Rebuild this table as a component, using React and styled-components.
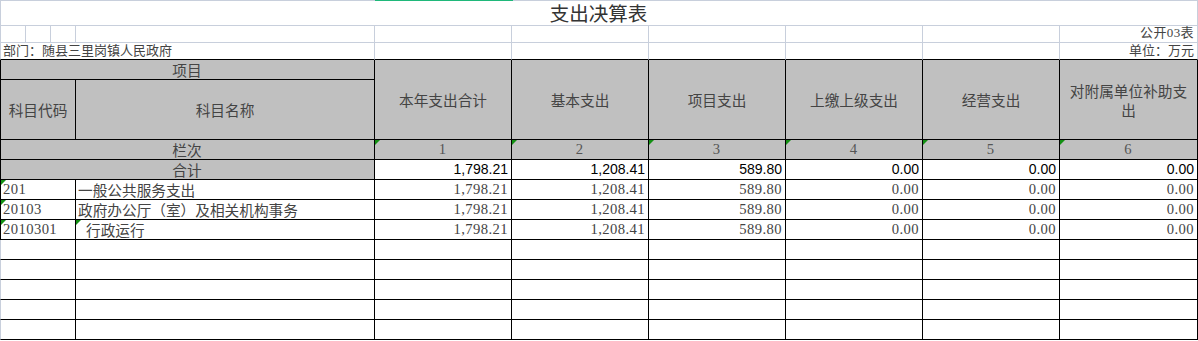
import React from "react";
import styled, { createGlobalStyle } from "styled-components";

const LIGHT = "#c8cfdc";
const CJK = `"Noto Sans CJK SC", "Liberation Serif", sans-serif`;
const NUM = `"Liberation Serif", "Noto Sans CJK SC", serif`;
const TOTAL = `"Liberation Sans", "Noto Sans CJK SC", sans-serif`;

const GlobalStyle = createGlobalStyle`
  html, body {
    margin: 0;
    padding: 0;
    background: #fff;
  }
`;

const Sheet = styled.div`
  display: grid;
  width: 1198px;
  grid-template-columns: 26px 25px 25px 299px repeat(5, 137px) 138px;
  grid-template-rows: 26px 17px 17px 20px 60px 20px 20px repeat(8, 20px);
  color: #333;
`;

const justify = { left: "flex-start", right: "flex-end", center: "center" };

const Cell = styled.div`
  grid-column: span ${(p) => p.$span || 1};
  grid-row: span ${(p) => p.$rows || 1};
  position: relative;
  box-sizing: border-box;
  display: flex;
  align-items: ${(p) => (p.$middle ? "center" : "flex-end")};
  justify-content: ${(p) => justify[p.$align || "left"]};
  text-align: ${(p) => p.$align || "left"};
  padding: ${(p) => (p.$middle ? "0 8px" : "0 3px")};
  padding-left: ${(p) => (p.$indent ? "10px" : p.$middle ? "8px" : "2px")};
  border-right: 1px solid ${(p) => (p.$light ? LIGHT : "#000")};
  border-bottom: 1px solid ${(p) => (p.$lightBottom ? LIGHT : "#000")};
  border-left: ${(p) => (p.$first ? `1px solid ${p.$lightLeft ? LIGHT : "#000"}` : "none")};
  border-top: ${(p) => (p.$top ? `1px solid ${LIGHT}` : "none")};
  background: ${(p) => (p.$head ? "#c0c0c0" : "#fff")};
  font-family: ${(p) => (p.$font === "num" ? NUM : p.$font === "total" ? TOTAL : CJK)};
  font-size: ${(p) => p.$size || 14.67}px;
  letter-spacing: ${(p) => (p.$font === "num" ? "0.4px" : "0")};
  color: ${(p) => p.$color || "#444"};
  line-height: 19px;
  white-space: ${(p) => (p.$wrap ? "normal" : "nowrap")};

  &::before {
    content: "";
    display: ${(p) => (p.$mark ? "block" : "none")};
    position: absolute;
    top: 0;
    left: 0;
    border-top: 5px solid #139013;
    border-right: 5px solid transparent;
  }
`;

const TitleCell = styled(Cell)`
  font-size: 19.5px;
  line-height: 24px;

  &::after {
    content: "";
    position: absolute;
    top: -1px;
    left: 374px;
    width: 138px;
    height: 1px;
    background: #1fb87a;
  }
`;

const heads = [
  "本年支出合计",
  "基本支出",
  "项目支出",
  "上缴上级支出",
  "经营支出",
  "对附属单位补助支出",
];

const total = ["1,798.21", "1,208.41", "589.80", "0.00", "0.00", "0.00"];

const rows = [
  { code: "201", name: "一般公共服务支出", values: total },
  { code: "20103", name: "政府办公厅（室）及相关机构事务", values: total },
  { code: "2010301", name: "行政运行", values: total, indent: true },
];

const App = () => {
  return (
    <>
      <GlobalStyle />
      <Sheet>
        <TitleCell $span={10} $align="center" $color="#333" $light $lightBottom $first $lightLeft $top>
          支出决算表
        </TitleCell>

        {Array.from({ length: 9 }).map((_, i) => (
          <Cell key={`r2-${i}`} $light $lightBottom $first={i === 0} $lightLeft />
        ))}
        <Cell $light $lightBottom $align="right" $font="num" $size={13}>
          公开03表
        </Cell>

        <Cell $span={4} $light $first $lightLeft $size={13}>
          部门：随县三里岗镇人民政府
        </Cell>
        {Array.from({ length: 5 }).map((_, i) => (
          <Cell key={`r3-${i}`} $light />
        ))}
        <Cell $light $align="right" $size={13}>
          单位：万元
        </Cell>

        <Cell $span={4} $head $first $align="center">
          项目
        </Cell>
        {heads.map((h) => (
          <Cell key={h} $rows={2} $head $middle $wrap $align="center">
            {h}
          </Cell>
        ))}
        <Cell $span={3} $head $first $middle $align="center">
          科目代码
        </Cell>
        <Cell $head $middle $align="center">
          科目名称
        </Cell>

        <Cell $span={4} $head $first $align="center">
          栏次
        </Cell>
        {heads.map((h, i) => (
          <Cell key={`n-${h}`} $head $mark $align="center" $font="num" $color="#555">
            {i + 1}
          </Cell>
        ))}

        <Cell $span={4} $head $first $align="center">
          合计
        </Cell>
        {total.map((v, i) => (
          <Cell key={`t-${i}`} $align="right" $font="total" $size={14} $color="#000">
            {v}
          </Cell>
        ))}

        {rows.map((row) => (
          <React.Fragment key={row.code}>
            <Cell $span={3} $first $mark $font="num">
              {row.code}
            </Cell>
            <Cell $indent={row.indent} $mark={row.indent}>
              {row.name}
            </Cell>
            {row.values.map((v, i) => (
              <Cell key={i} $align="right" $font="num">
                {v}
              </Cell>
            ))}
          </React.Fragment>
        ))}

        {Array.from({ length: 5 }).map((_, r) => (
          <React.Fragment key={`e-${r}`}>
            <Cell $span={3} $first $lightLeft />
            {Array.from({ length: 7 }).map((__, i) => (
              <Cell key={i} />
            ))}
          </React.Fragment>
        ))}
      </Sheet>
    </>
  );
};

export default App;
